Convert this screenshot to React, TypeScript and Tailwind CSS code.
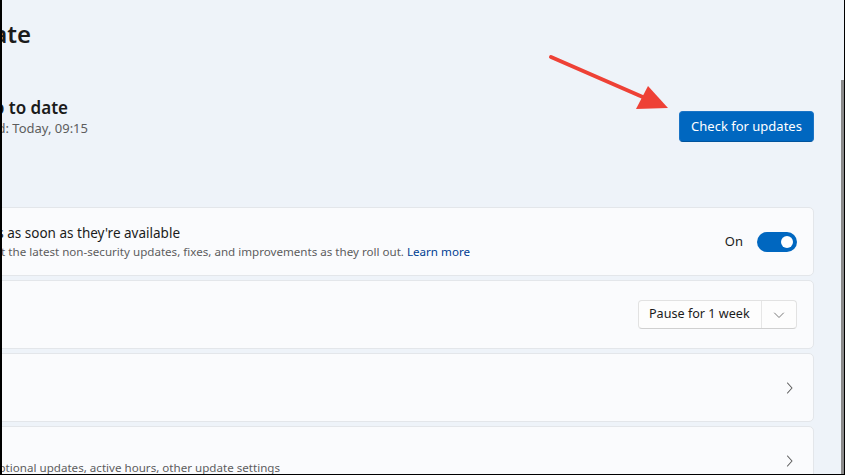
import React from "react";

const ChevronRight = () => (
  <svg width="16" height="16" viewBox="0 0 16 16" className="shrink-0">
    <path d="M6.5 3 L11 8 L6.5 13" fill="none" stroke="#5c5c5c" strokeWidth="1.1" strokeLinecap="round" strokeLinejoin="round" />
  </svg>
);

const ChevronDown = () => (
  <svg width="12" height="12" viewBox="0 0 12 12" className="shrink-0">
    <path d="M1.5 4 L6 8.5 L10.5 4" fill="none" stroke="#7a7a7a" strokeWidth="1" strokeLinecap="round" strokeLinejoin="round" />
  </svg>
);

const cardCls =
  "h-[69px] shrink-0 rounded-[5px] border border-[#e3e6ea] bg-[#fafbfd] flex items-center pl-[29px]";

export default function App() {
  return (
    <div className="w-[845px] h-[475px] overflow-hidden flex bg-black font-['Noto_Sans',sans-serif] text-[#1b1b1b]">
      <div className="relative flex-1 ml-[2px] mb-[1px] bg-[#eef3f9] overflow-hidden">
        <div className="flex flex-col -ml-[30px] mr-[27px]">
          {/* Title */}
          <div className="pt-[18px] pl-[30px]">
            <div className="w-[29px] overflow-hidden flex justify-end">
              <span className="shrink-0 whitespace-nowrap text-[24px] leading-[32px] font-semibold">Windows Update</span>
            </div>
          </div>

          {/* Status row */}
          <div className="flex justify-between items-start mt-[47px] pl-[30px]">
            <div className="flex flex-col">
              <div className="w-[66px] overflow-hidden flex justify-end">
                <span className="shrink-0 whitespace-nowrap text-[17px] leading-[22px] font-semibold">You're up to date</span>
              </div>
              <div className="w-[86px] overflow-hidden flex justify-end">
                <span className="shrink-0 whitespace-nowrap text-[13px] leading-[18px] text-[#5d5d5d]">Last checked: Today, 09:15</span>
              </div>
            </div>
            <button className="mt-[14px] h-[31px] w-[135px] rounded-[4px] bg-[#0067c0] border border-[#1a74c6] border-b-[#00539c] text-white text-[13px] leading-none flex items-center justify-center">
              Check for updates
            </button>
          </div>

          {/* Cards */}
          <div className="flex flex-col gap-[4px] mt-[65px]">
            <div className={cardCls + " pr-[16px]"}>
              <div className="flex flex-col flex-1">
                <div className="w-[178px] overflow-hidden flex justify-end">
                  <span className="shrink-0 whitespace-nowrap text-[13.5px] leading-[19px]">Get the latest updates as soon as they're available</span>
                </div>
                <div className="w-[468px] overflow-hidden flex justify-end">
                  <span className="shrink-0 whitespace-nowrap text-[11.6px] leading-[17px] text-[#5d5d5d]">
                    Be among the first to get the latest non-security updates, fixes, and improvements as they roll out.{" "}
                    <span className="text-[#003e92]">Learn more</span>
                  </span>
                </div>
              </div>
              <div className="flex items-center gap-[14px]">
                <span className="text-[13px] leading-none">On</span>
                <div className="w-[40px] h-[20px] rounded-full bg-[#0067c0] flex items-center justify-end pr-[4px]">
                  <div className="w-[12px] h-[12px] rounded-full bg-white" />
                </div>
              </div>
            </div>

            <div className={cardCls + " pr-[16px]"}>
              <div className="flex flex-col flex-1">
                <div className="w-0 overflow-hidden flex justify-end">
                  <span className="shrink-0 whitespace-nowrap text-[13px] leading-[19px]">Pause updates</span>
                </div>
              </div>
              <div className="flex h-[29px] w-[159px] rounded-[4px] border border-[#e2e2e2] border-b-[#d0d0d0] bg-[#fdfdfd]">
                <div className="flex-1 flex items-center pl-[10px] text-[12.6px]">Pause for 1 week</div>
                <div className="w-[35px] border-l border-[#e6e6e6] flex items-center justify-center">
                  <ChevronDown />
                </div>
              </div>
            </div>

            <div className={cardCls + " pr-[16px]"}>
              <div className="flex flex-col flex-1">
                <div className="w-0 overflow-hidden flex justify-end">
                  <span className="shrink-0 whitespace-nowrap text-[13px] leading-[19px]">Update history</span>
                </div>
              </div>
              <ChevronRight />
            </div>

            <div className={cardCls + " pr-[16px]"}>
              <div className="flex flex-col flex-1 mb-[6px]">
                <div className="w-0 overflow-hidden flex justify-end">
                  <span className="shrink-0 whitespace-nowrap text-[13px] leading-[19px]">Advanced options</span>
                </div>
                <div className="w-[278px] overflow-hidden flex justify-end">
                  <span className="shrink-0 whitespace-nowrap text-[11.6px] leading-[17px] text-[#5d5d5d]">
                    Delivery optimization, optional updates, active hours, other update settings
                  </span>
                </div>
              </div>
              <ChevronRight />
            </div>
          </div>
        </div>

        {/* Annotation arrow */}
        <svg className="absolute left-[-2px] top-0 pointer-events-none" width="845" height="200" viewBox="0 0 845 200">
          <line x1="551" y1="57" x2="645" y2="98" stroke="#ee4136" strokeWidth="4" strokeLinecap="round" />
          <polygon points="668,108 636,109 648,86" fill="#ee4136" />
        </svg>
      </div>
      <div className="w-[3px] mb-[1px] bg-[#eef3f9] flex flex-col">
        <div className="mt-[80px] flex-1 bg-[#8a8a8a]" />
      </div>
      <div className="w-[1px]" />
    </div>
  );
}
